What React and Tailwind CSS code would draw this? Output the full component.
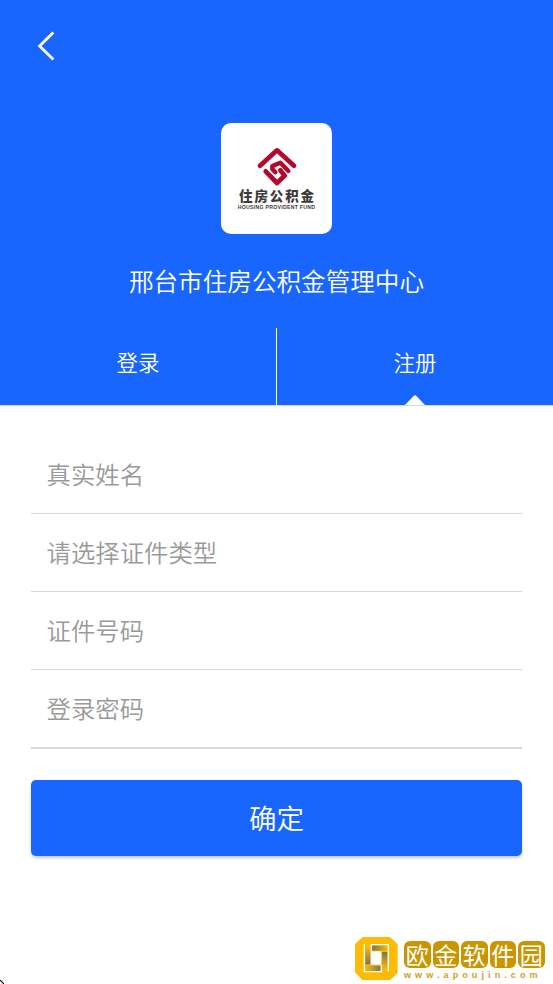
const fields = [
  { id: "name", placeholder: "真实姓名" },
  { id: "certType", placeholder: "请选择证件类型" },
  { id: "certNo", placeholder: "证件号码" },
  { id: "password", placeholder: "登录密码" },
]

const stampChars = ["欧", "金", "软", "件", "园"]

const BackIcon = () => (
  <svg viewBox="0 0 20 32" className="w-5 h-8" fill="none" stroke="currentColor" strokeWidth="2.8">
    <path d="M17.4 2.6 L3.6 16 L17.4 29.4" />
  </svg>
)

const FundLogo = () => (
  <svg
    viewBox="0 0 138 138"
    className="w-[46px] h-[46px]"
    fill="none"
    stroke="#b8052b"
    strokeWidth="14"
    strokeLinecap="round"
    strokeLinejoin="round"
  >
    <path d="M18 65 L69 19 L120 65" />
    <path d="M103 81 L79 56 L55 66 L55 76 L64 85" strokeWidth="13" />
    <path d="M35 82 L69 117 L92 95 L79 79" />
  </svg>
)

const SiteMark = () => (
  <svg viewBox="0 0 150 150" className="w-[50px] h-[50px]">
    <defs>
      <linearGradient id="toRight" x1="0" x2="1" y1="0" y2="0">
        <stop offset="0" stopColor="#80744f" />
        <stop offset="1" stopColor="#fdbb07" />
      </linearGradient>
      <linearGradient id="toLeft" x1="1" x2="0" y1="0" y2="0">
        <stop offset="0" stopColor="#80744f" />
        <stop offset="1" stopColor="#fdbb07" />
      </linearGradient>
      <linearGradient id="toTop" x1="0" x2="0" y1="1" y2="0">
        <stop offset="0" stopColor="#80744f" />
        <stop offset="1" stopColor="#fdbb07" />
      </linearGradient>
      <linearGradient id="toBottom" x1="0" x2="0" y1="0" y2="1">
        <stop offset="0" stopColor="#80744f" />
        <stop offset="1" stopColor="#fdbb07" />
      </linearGradient>
    </defs>
    <path d="M32 15 H114 L137 37 V122 L115 144 H31 L9 121 V36 Z" fill="#fdbb07" />
    <path d="M58 58 H88 V98 H58 Z" fill="#fff" />
    <path d="M61 40 H107 V56 H61 Z" fill="url(#toRight)" />
    <path d="M90 60 H107 V112 H90 Z" fill="url(#toBottom)" />
    <path d="M40 101 H86 V117 H40 Z" fill="url(#toLeft)" />
    <path d="M40 44 H56 V97 H40 Z" fill="url(#toTop)" />
    <path d="M37 36 V119 H88 V98 M58 58 V38 H109 V118 M58 38 V98" fill="none" stroke="#fff" strokeWidth="4" />
  </svg>
)

const LogoCard = () => (
  <div className="w-[111px] h-[111px] mx-auto rounded-[10px] bg-white flex flex-col items-center pt-[21px]">
    <FundLogo />
    <div className="-mt-[1px] ml-[2px] h-[13px] leading-[13px] text-[13.5px] font-black tracking-[1.9px] text-[#3e3a39] whitespace-nowrap">
      住房公积金
    </div>
    <div className="mt-[2px] h-[6px] leading-[6px] text-[5.2px] font-bold tracking-[0.26px] text-[#3e3a39] whitespace-nowrap font-['Liberation_Sans',sans-serif]">
      HOUSING PROVIDENT FUND
    </div>
  </div>
)

const Header = () => (
  <header className="h-[405px] bg-[#1966ff] text-white flex flex-col">
    <div className="h-[123px] pt-[30px] pl-9">
      <BackIcon />
    </div>
    <LogoCard />
    <h1 className="mt-7 h-9 leading-9 text-center text-[24.6px] font-[350]">邢台市住房公积金管理中心</h1>
    <div className="mt-[30px] flex h-[77px] text-[21.5px] font-[350]">
      <button className="w-[277px] border-r border-white pb-[9px]">登录</button>
      <button className="relative flex-1 pb-[9px]">
        注册
        <svg viewBox="0 0 22 10" className="absolute bottom-0 left-[127px] w-[22px] h-[10px]" fill="#fff">
          <path d="M1 10 L9.6 0.9 Q11 -0.3 12.4 0.9 L21 10 Z" />
        </svg>
      </button>
    </div>
  </header>
)

const Watermark = () => (
  <div className="flex pl-[352px]">
    <SiteMark />
    <div className="pt-[9px] pl-[2px]">
      <div className="flex gap-[2px]">
        {stampChars.map((c) => (
          <span
            key={c}
            className="w-[26.5px] h-[27px] rounded-[6px] bg-[#cb9502] text-white text-[23px] leading-[26px] text-center"
          >
            {c}
          </span>
        ))}
      </div>
      <div className="mt-[2px] h-[10px] leading-[10px] text-[9px] font-bold tracking-[4.1px] text-[#cf9d2b] whitespace-nowrap font-['Liberation_Sans',sans-serif]">
        www.apoujin.com
      </div>
    </div>
  </div>
)

const App = () => (
  <div className="relative w-[553px] h-[984px] overflow-hidden bg-white font-['Noto_Sans_CJK_SC',sans-serif]">
    <Header />
    <form className="px-[31px] pt-[31px] border-t border-[#c9dbff]">
      {fields.map((f) => (
        <input
          key={f.id}
          placeholder={f.placeholder}
          className="block w-full h-[78px] px-[15.5px] pb-[2px] -mt-px mb-px last-of-type:h-[79px] border-b last-of-type:border-b-2 border-[#d8d8d8] text-[24.4px] font-[350] outline-none placeholder:text-[#999999]"
        />
      ))}
      <button
        type="button"
        className="mt-[29.5px] w-full h-[76.5px] pb-px rounded-[5px] bg-[#1966ff] text-white text-[27.5px] font-[350] shadow-[0_2px_3px_rgba(0,0,0,0.22)]"
      >
        确定
      </button>
    </form>
    <div className="pt-[76px]">
      <Watermark />
    </div>
    <svg viewBox="0 0 4 4" className="absolute left-0 bottom-0 w-1 h-1" stroke="#000" strokeWidth="1.2">
      <path d="M0 0 L4 4" />
    </svg>
  </div>
)

export default App
